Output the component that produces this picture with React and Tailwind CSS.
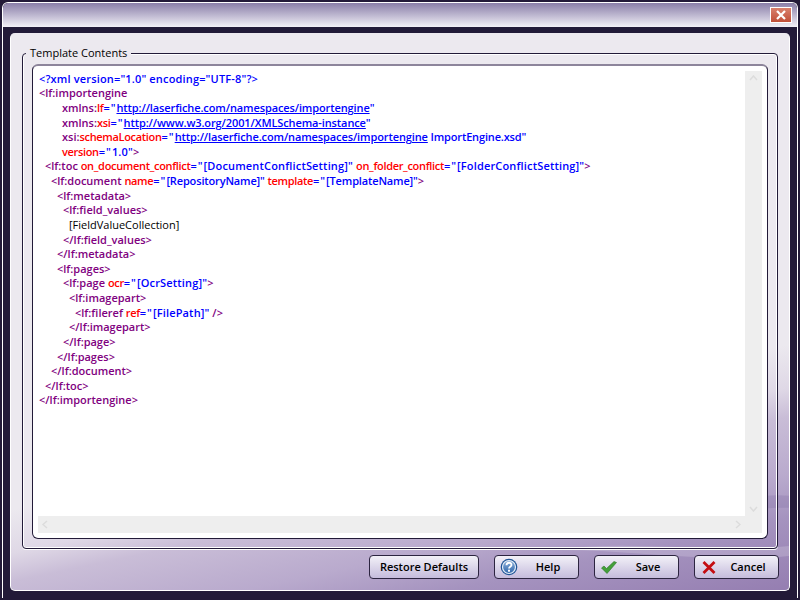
const T = "text-[#800080]";
const R = "text-[#ff0000] tracking-[-0.33px]";
const B = "text-[#0000ff] tracking-[0.16px]";
const B2 = "text-[#0000ff] tracking-[-0.15px]";
const E = "text-[#0000ff] tracking-[1px]";
const U = "text-[#0000ff] underline tracking-[-0.11px]";

function S({ c, children }) {
  return <span className={c}>{children}</span>;
}

function Line({ indent, children }) {
  return (
    <div className={`h-[14.64px] leading-[14.64px] whitespace-pre ${indent}`}>{children}</div>
  );
}

function Btn({ icon, label }) {
  return (
    <button className="w-[85px] h-[24px] flex items-center rounded-[4px] border border-[#2c2440] bg-gradient-to-b from-[#f3f1f8] to-[#c5bcdc] text-[11px] font-semibold text-black">
      <span className="ml-[5px] w-[18px] flex items-center justify-center">{icon}</span>
      <span className="flex-1 text-center">{label}</span>
    </button>
  );
}

const Help = (
  <svg width="18" height="18" viewBox="0 0 18 18">
    <defs>
      <linearGradient id="h" x1="0" y1="0" x2="0" y2="1">
        <stop offset="0" stopColor="#8fb2dc" />
        <stop offset="1" stopColor="#2e66ab" />
      </linearGradient>
    </defs>
    <circle cx="9" cy="9" r="8.300" fill="#1f5596" />
    <circle cx="9" cy="9" r="6.500" fill="url(#h)" stroke="#e4edf7" strokeWidth="1.200" />
    <path d="M6.500 7.200c0-3.200 5-3.200 5-.3 0 1.900-2.500 1.800-2.500 3.600" fill="none" stroke="#fff" strokeWidth="1.800" />
    <rect x="8" y="11.700" width="2" height="2" fill="#fff" />
  </svg>
);
const Check = (
  <svg width="16" height="13" viewBox="0 0 16 13">
    <path d="M0.500 7L3 5l2.500 2.500L13 .5l2.500 1L6 12.500z" fill="#43a03a" stroke="#2b7526" strokeWidth="0.600" />
  </svg>
);
const Cross = (
  <svg width="14" height="13" viewBox="0 0 14 13">
    <path d="M1.500 1l11 11M12.500 1l-11 11" stroke="#c40d12" strokeWidth="2.800" fill="none" />
  </svg>
);

export default function App() {
  return (
    <div className="w-[800px] h-[600px] bg-[#221a38] p-[2px] overflow-hidden" style={{ fontFamily: '"Open Sans","Noto Sans",sans-serif' }}>
      <div className="h-full border-t border-l border-r border-white rounded-t-[6px] flex flex-col">
        <div className="h-[24px] shrink-0 rounded-t-[5px] bg-gradient-to-b from-[#8a7fa8] to-[#f3f1f7] flex justify-end items-start pt-[4px] pr-[5px]">
          <div className="w-[22px] h-[16px] border border-white bg-gradient-to-b from-[#d9806c] to-[#c04f38] flex items-center justify-center">
            <svg width="10" height="10" viewBox="0 0 10 10"><path d="M1 1l8 8M9 1l-8 8" stroke="#fff" strokeWidth="2.200" /></svg>
          </div>
        </div>
        <div className="flex-1 px-[7px] pt-[6px] pb-[7px] flex">
          <div className="relative flex-1 rounded-[5px] border-r border-b border-l border-white bg-[linear-gradient(168deg,#ece9ef_0%,#ece9ef_66%,#dfd8e6_72%,#c9bdd7_76%,#b9aacd_84%,#a593bf_90%,#957eb1_100%)] pl-[11px] pr-[11px] pt-[20px] pb-[6px] flex flex-col">
            <svg className="absolute left-0 top-0 w-full h-full pointer-events-none" viewBox="0 0 778 556" preserveAspectRatio="none">
              <path d="M540 516C620 505 700 520 778 512L778 522C700 530 620 515 540 516z" fill="#fff" opacity="0.18" />
              <path d="M660 470C700 478 740 458 778 462L778 474C740 472 700 488 660 470z" fill="#6f5a96" opacity="0.2" />
            </svg>
            <div className="relative h-[496px] border border-[#221a38] rounded-[4px] shadow-[inset_0_0_0_1px_#fff,0_1px_0_#fff] pt-[10px] px-[9px] pb-[9px] flex">
              <div className="absolute left-[3px] top-[-8px] px-[4px] bg-[#ece9ef] text-[11px] leading-[14px] font-medium text-black">Template Contents</div>
              <div className="flex-1 rounded-[6px] border border-[#221a38] border-t-2 border-t-[#8d859b] bg-white pl-[6px] pt-[5.7px] pr-[5px] pb-[5px] relative text-[11px] font-semibold">
                <Line indent="pl-0"><S c={B}>{'<?xml version="1.0" encoding="UTF-8"?>'}</S></Line>
                <Line indent="pl-0"><S c={T}>{'<lf:importengine'}</S></Line>
                <Line indent="pl-[23px]"><S c={T}>xmlns:</S><S c={R}>lf</S><S c={E}>="</S><S c={U}>http://laserfiche.com/namespaces/importengine</S><S c={B}>"</S></Line>
                <Line indent="pl-[23px]"><S c={T}>xmlns:</S><S c={R}>xsi</S><S c={E}>="</S><S c={U}>http://www.w3.org/2001/XMLSchema-instance</S><S c={B}>"</S></Line>
                <Line indent="pl-[23px]"><S c={T}>xsi:</S><S c={R}>schemaLocation</S><S c={E}>="</S><S c={U}>http://laserfiche.com/namespaces/importengine</S><S c={B2}> ImportEngine.xsd"</S></Line>
                <Line indent="pl-[23px]"><S c={R}>version</S><S c={E}>="</S><S c={B}>1.0"</S><S c={T}>{'>'}</S></Line>
                <Line indent="pl-[6px]"><S c={T}>{'<lf:toc '}</S><S c={R}>on_document_conflict</S><S c={E}>="</S><S c={B}>[DocumentConflictSetting]" </S><S c={R}>on_folder_conflict</S><S c={E}>="</S><S c={B}>[FolderConflictSetting]"</S><S c={T}>{'>'}</S></Line>
                <Line indent="pl-[12px]"><S c={T}>{'<lf:document '}</S><S c={R}>name</S><S c={E}>="</S><S c={B2}>[RepositoryName]" </S><S c={R}>template</S><S c={E}>="</S><S c={B2}>[TemplateName]"</S><S c={T}>{'>'}</S></Line>
                <Line indent="pl-[18px]"><S c={T}>{'<lf:metadata>'}</S></Line>
                <Line indent="pl-[24px]"><S c={T}>{'<lf:field_values>'}</S></Line>
                <Line indent="pl-[30px]"><S c="text-black font-medium">[FieldValueCollection]</S></Line>
                <Line indent="pl-[24px]"><S c={T}>{'</lf:field_values>'}</S></Line>
                <Line indent="pl-[18px]"><S c={T}>{'</lf:metadata>'}</S></Line>
                <Line indent="pl-[18px]"><S c={T}>{'<lf:pages>'}</S></Line>
                <Line indent="pl-[24px]"><S c={T}>{'<lf:page '}</S><S c={R}>ocr</S><S c={E}>="</S><S c={B}>[OcrSetting]"</S><S c={T}>{'>'}</S></Line>
                <Line indent="pl-[30px]"><S c={T}>{'<lf:imagepart>'}</S></Line>
                <Line indent="pl-[36px]"><S c={T}>{'<lf:fileref '}</S><S c={R}>ref</S><S c={E}>="</S><S c={B}>[FilePath]"</S><S c={T}>{' />'}</S></Line>
                <Line indent="pl-[30px]"><S c={T}>{'</lf:imagepart>'}</S></Line>
                <Line indent="pl-[24px]"><S c={T}>{'</lf:page>'}</S></Line>
                <Line indent="pl-[18px]"><S c={T}>{'</lf:pages>'}</S></Line>
                <Line indent="pl-[12px]"><S c={T}>{'</lf:document>'}</S></Line>
                <Line indent="pl-[6px]"><S c={T}>{'</lf:toc>'}</S></Line>
                <Line indent="pl-0"><S c={T}>{'</lf:importengine>'}</S></Line>
                <div className="absolute right-[5px] top-[5px] bottom-[22px] w-[17px] bg-[#eeeeee] flex flex-col justify-between items-center py-[4px]">
                  <svg width="9" height="6" viewBox="0 0 9 6"><path d="M1 5l3.500-4 3.500 4" fill="none" stroke="#dcdcdc" strokeWidth="1.500" /></svg>
                  <svg width="9" height="6" viewBox="0 0 9 6"><path d="M1 1l3.500 4 3.500-4" fill="none" stroke="#dcdcdc" strokeWidth="1.500" /></svg>
                </div>
                <div className="absolute left-[5px] right-[5px] bottom-[5px] h-[17px] bg-[#eeeeee] flex justify-between items-center pl-[4px] pr-[21px]">
                  <svg width="6" height="9" viewBox="0 0 6 9"><path d="M5 1L1 4.500 5 8" fill="none" stroke="#dcdcdc" strokeWidth="1.500" /></svg>
                  <svg width="6" height="9" viewBox="0 0 6 9"><path d="M1 1l4 3.500L1 8" fill="none" stroke="#dcdcdc" strokeWidth="1.500" /></svg>
                </div>
              </div>
            </div>
            <div className="relative flex-1 flex justify-end items-center gap-[15px] pt-[1px] mr-[-1px]">
              <button className="w-[110px] h-[24px] rounded-[4px] border border-[#2c2440] bg-gradient-to-b from-[#f3f1f8] to-[#c5bcdc] text-[11px] font-semibold text-black">Restore Defaults</button>
              <Btn icon={Help} label="Help" />
              <Btn icon={Check} label="Save" />
              <Btn icon={Cross} label="Cancel" />
            </div>
          </div>
        </div>
      </div>
    </div>
  );
}
